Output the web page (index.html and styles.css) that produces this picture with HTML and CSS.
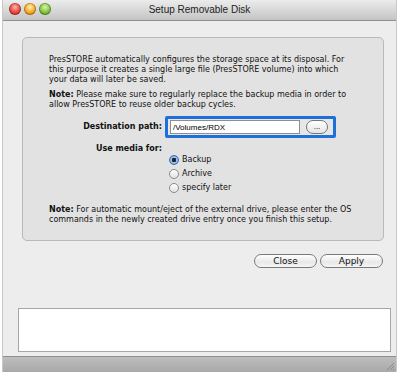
FILE: index.html
```html
<!DOCTYPE html>
<html lang="en">
<head>
  <meta charset="UTF-8">
  <title>Setup Removable Disk</title>
  <link rel="stylesheet" href="styles.css">
</head>
<body>
  <div class="window">
    <div class="titlebar">
      <div class="lights">
        <span class="light red"></span>
        <span class="light yellow"></span>
        <span class="light green"></span>
      </div>
      <div class="title">Setup Removable Disk</div>
    </div>

    <div class="content">
      <div class="group">
        <p>PresSTORE automatically configures the storage space at its disposal. For this purpose it creates a single large file (PresSTORE volume) into which your data will later be saved.</p>
        <p><strong>Note:</strong> Please make sure to regularly replace the backup media in order to allow PresSTORE to reuse older backup cycles.</p>

        <div class="form-row path-row">
          <label class="label">Destination path:</label>
          <div class="focus-ring">
            <input class="path" type="text" value="/Volumes/RDX">
            <button class="browse">...</button>
          </div>
        </div>

        <div class="form-row media-row">
          <span class="label">Use media for:</span>
          <div class="radios">
            <label class="radio"><span class="dot checked"></span>Backup</label>
            <label class="radio"><span class="dot"></span>Archive</label>
            <label class="radio"><span class="dot"></span>specify later</label>
          </div>
        </div>

        <p class="note2"><strong>Note:</strong> For automatic mount/eject of the external drive, please enter the OS commands in the newly created drive entry once you finish this setup.</p>
      </div>

      <div class="buttons">
        <button class="pill">Close</button>
        <button class="pill">Apply</button>
      </div>

      <div class="log"></div>
    </div>

    <div class="statusbar">
      <svg class="grip" width="10" height="10" viewBox="0 0 10 10">
        <path d="M9 2 L2 9 M9 5 L5 9 M9 8 L8 9" stroke="#8a8a8a" stroke-width="1"/>
      </svg>
    </div>
  </div>
</body>
</html>
```

FILE: styles.css
```css
body {
  margin: 0;
  background: #fff;
  font-family: "DejaVu Sans", Verdana, sans-serif;
  color: #111;
}
.window {
  width: 395px;
  height: 372px;
  margin-left: 2px;
  display: flex;
  flex-direction: column;
  background: #ededed;
  border-left: 1px solid #c8c8c8;
  border-right: 1px solid #c8c8c8;
  box-sizing: border-box;
}
.titlebar {
  height: 21px;
  flex: none;
  position: relative;
  background: linear-gradient(#ececec, #c4c4c4);
  border-bottom: 1px solid #8f8f8f;
  box-sizing: border-box;
}
.lights {
  display: flex;
  gap: 3px;
  padding: 3px 0 0 6px;
}
.light {
  width: 12px;
  height: 12px;
  border-radius: 50%;
  box-shadow: inset 0 0 0 1px rgba(0, 0, 0, 0.25);
}
.red { background: radial-gradient(circle at 50% 35%, #ffb2ab, #e3443a 55%, #a2231c); }
.yellow { background: radial-gradient(circle at 50% 35%, #fff0a8, #f2a523 55%, #b86d0c); }
.green { background: radial-gradient(circle at 50% 35%, #d9f5a8, #7cc13a 55%, #3f7e16); }
.title {
  position: absolute;
  top: 4px;
  left: 0;
  right: 0;
  text-align: center;
  font: 10px "Liberation Sans", Arial, sans-serif;
  color: #222;
}
.content {
  flex: 1;
  padding: 16px 12px 0 19px;
  display: flex;
  flex-direction: column;
}
.group {
  height: 204px;
  box-sizing: border-box;
  background: #e2e2e2;
  border: 1px solid #b9b9b9;
  border-radius: 5px;
  padding: 17px 26px 0 26px;
  font-size: 8px;
  line-height: 10px;
}
.group p {
  margin: 0 0 5px;
}
.form-row {
  display: flex;
}
.label {
  width: 113px;
  text-align: right;
  font-weight: bold;
  flex: none;
}
.path-row {
  margin-top: 6px;
  align-items: center;
}
.focus-ring {
  margin-left: 3px;
  width: 171px;
  height: 22px;
  box-sizing: border-box;
  border: 3px solid #1f6fdb;
  border-radius: 2px;
  display: flex;
  align-items: center;
  padding: 0 3px 0 2px;
  background: #e6e6e6;
}
.path {
  width: 130px;
  height: 14px;
  box-sizing: border-box;
  border: 1px solid #8e8e8e;
  background: #fff;
  font: 8px "Liberation Sans", Arial, sans-serif;
  padding: 0 2px;
  margin: 0;
}
.browse {
  margin-left: 6px;
  width: 22px;
  height: 14px;
  border: 1px solid #777;
  border-radius: 7px;
  background: linear-gradient(#fff, #e4e4e4);
  font-size: 8px;
  line-height: 8px;
  padding: 0;
}
.media-row {
  margin-top: 6px;
}
.radios {
  margin-left: 7px;
  padding-top: 11px;
  display: flex;
  flex-direction: column;
  gap: 4px;
}
.radio {
  display: flex;
  align-items: center;
  gap: 3px;
}
.dot {
  width: 10px;
  height: 10px;
  border-radius: 50%;
  border: 1px solid #8a8a8a;
  background: linear-gradient(#fff, #e2e2e2);
  box-sizing: border-box;
}
.dot.checked {
  background: radial-gradient(circle, #222 0 2px, #9ec4ee 2.5px, #4b8fdc);
  border-color: #3c6fb0;
}
.group .note2 {
  margin-top: 12px;
}
.buttons {
  display: flex;
  justify-content: flex-end;
  gap: 3px;
  margin-top: 13px;
  padding-right: 1px;
}
.pill {
  width: 63px;
  height: 14px;
  border: 1px solid #7a7a7a;
  border-radius: 7px;
  background: linear-gradient(#ffffff, #e8e8e8 60%, #f6f6f6);
  font: 9px "DejaVu Sans", Verdana, sans-serif;
  color: #111;
  padding: 0;
}
.log {
  margin: 40px -7px 0 -4px;
  height: 42px;
  background: #fff;
  border: 1px solid #a6a6a6;
}
.statusbar {
  margin-top: auto;
  height: 15px;
  flex: none;
  background: linear-gradient(#bdbdbd, #a9a9a9);
  border-top: 1px solid #909090;
  display: flex;
  justify-content: flex-end;
  align-items: flex-end;
}
.grip {
  margin: 0 1px 1px 0;
}
```
